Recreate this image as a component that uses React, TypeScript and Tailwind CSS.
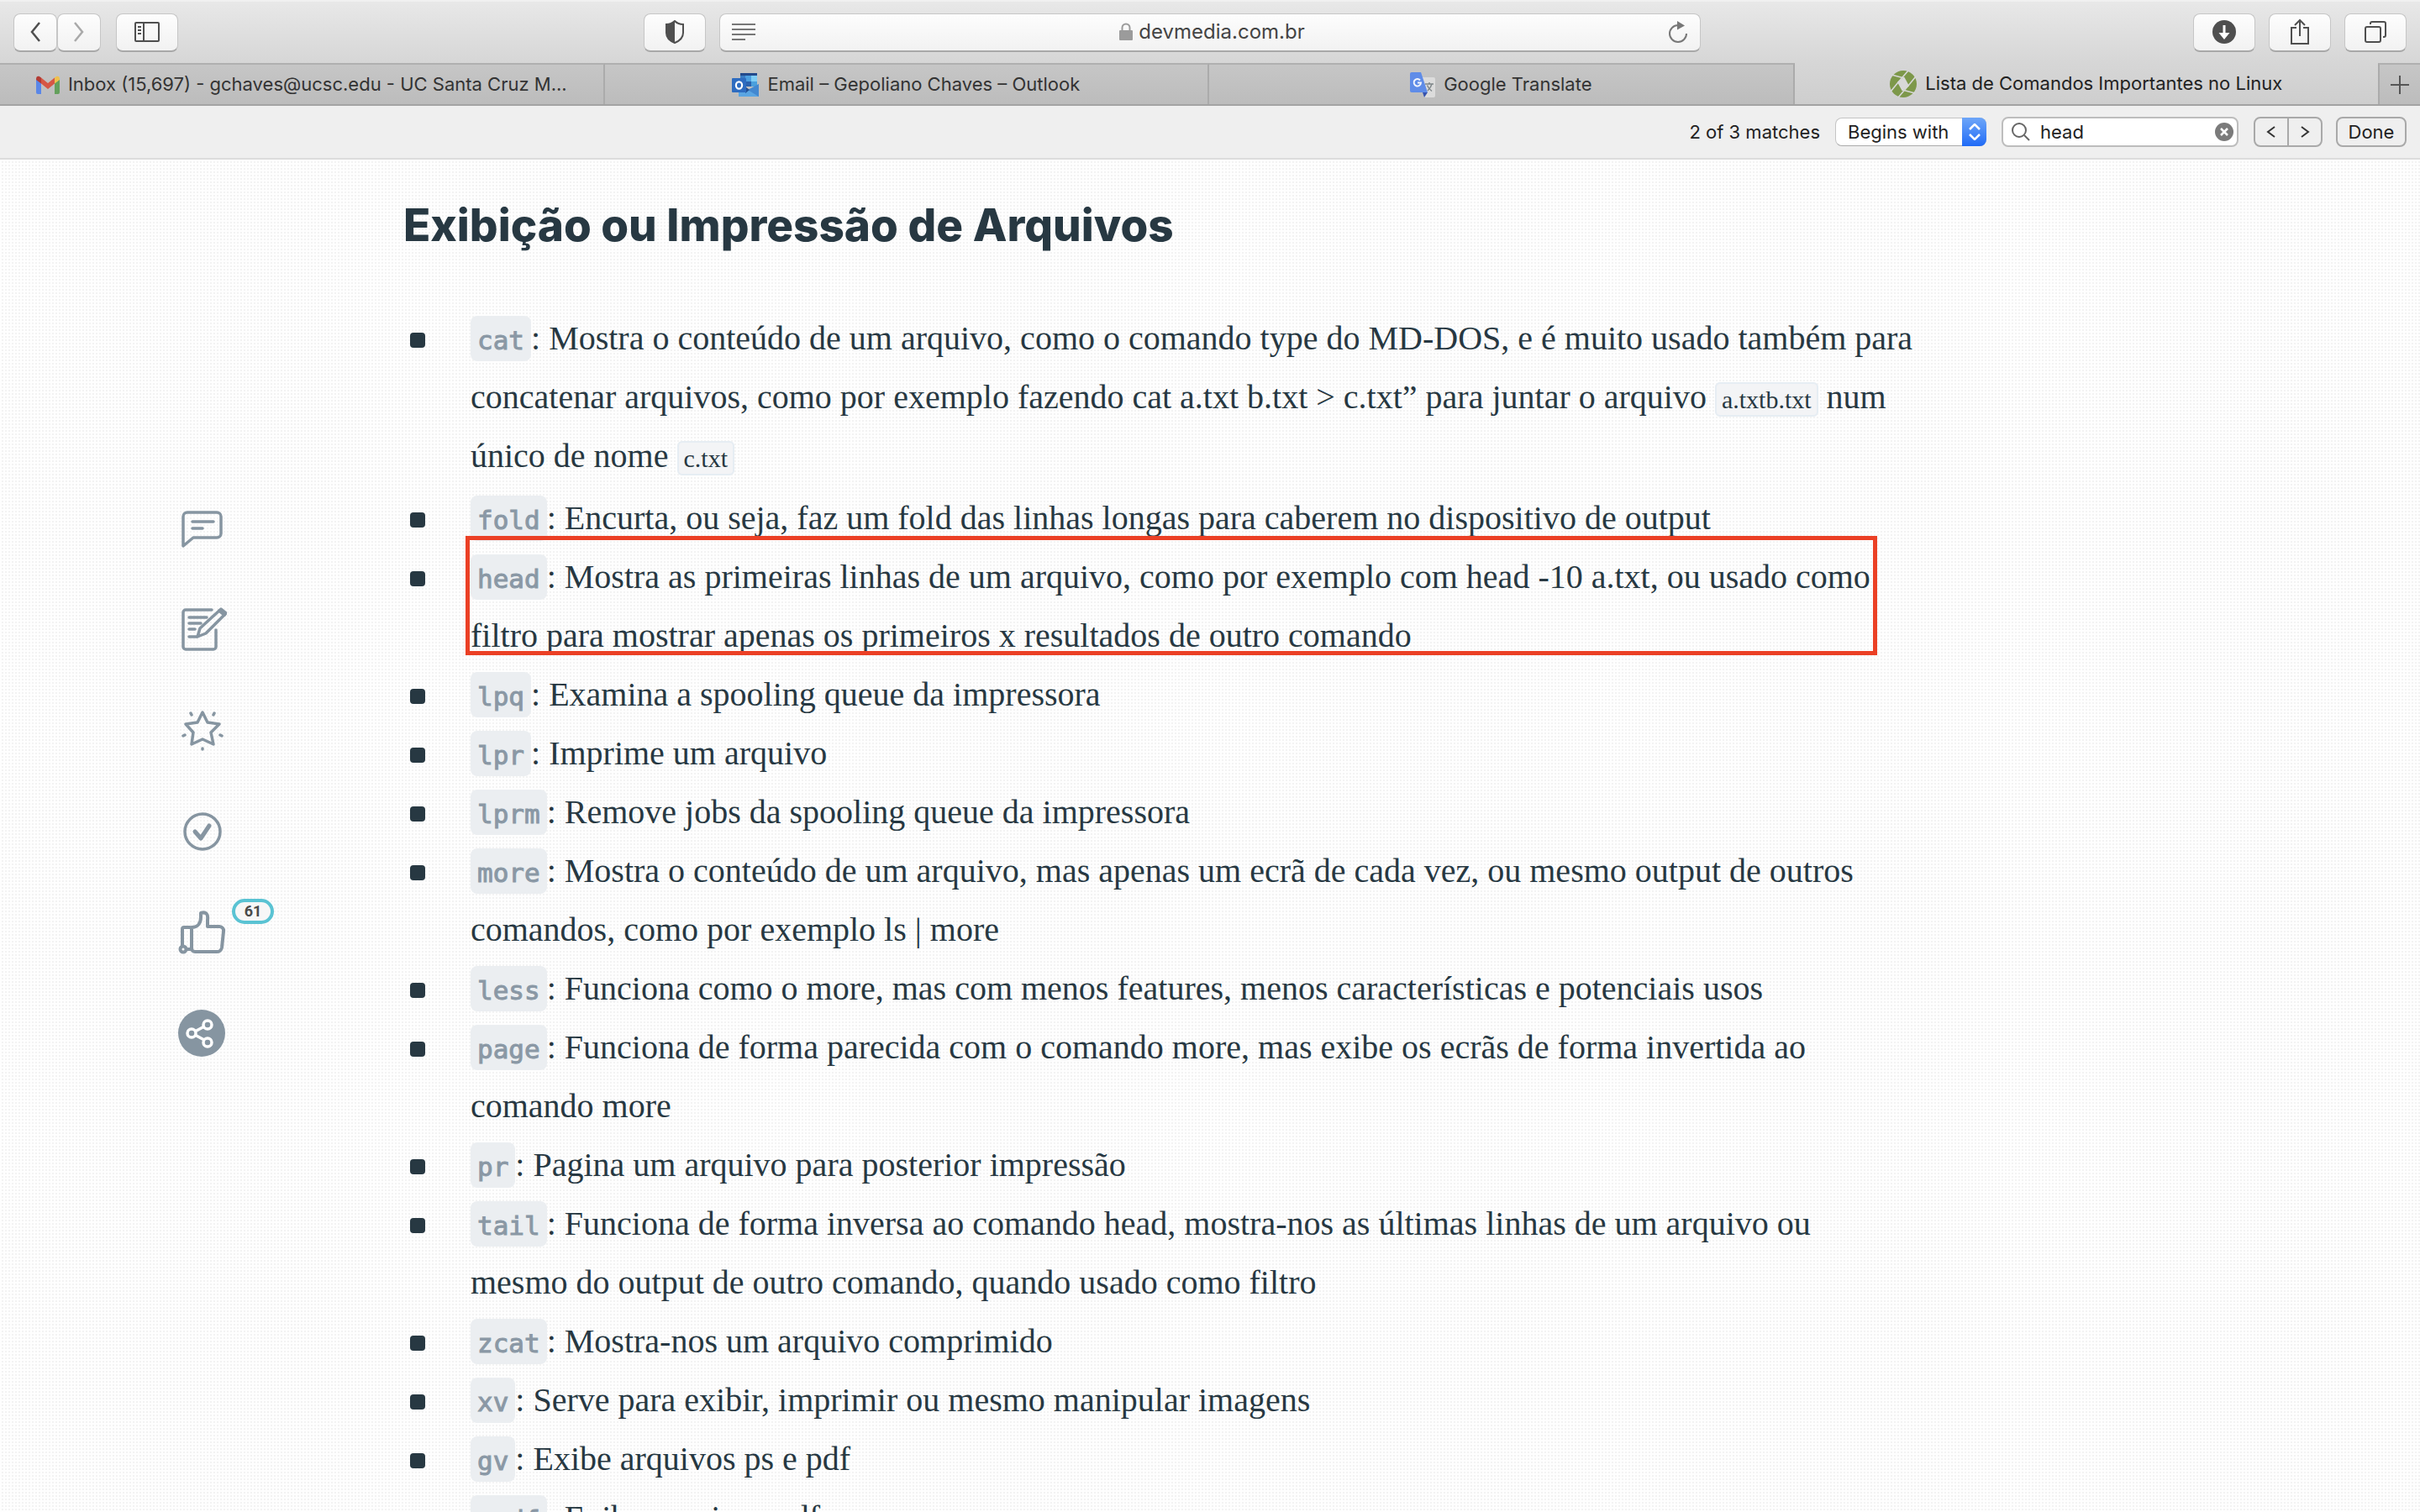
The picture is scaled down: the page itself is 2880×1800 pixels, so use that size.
import React from "react";

const commands: { name: string; body: React.ReactNode; boxed?: boolean }[] = [
  {
    name: "cat",
    body: (
      <>
        Mostra o conteúdo de um arquivo, como o comando type do MD-DOS, e é muito usado também para
        concatenar arquivos, como por exemplo fazendo cat a.txt b.txt &gt; c.txt” para juntar o arquivo{" "}
        <FileName>a.txtb.txt</FileName> num único de nome <FileName>c.txt</FileName>
      </>
    ),
  },
  { name: "fold", body: "Encurta, ou seja, faz um fold das linhas longas para caberem no dispositivo de output" },
  {
    name: "head",
    boxed: true,
    body: "Mostra as primeiras linhas de um arquivo, como por exemplo com head -10 a.txt, ou usado como filtro para mostrar apenas os primeiros x resultados de outro comando",
  },
  { name: "lpq", body: "Examina a spooling queue da impressora" },
  { name: "lpr", body: "Imprime um arquivo" },
  { name: "lprm", body: "Remove jobs da spooling queue da impressora" },
  {
    name: "more",
    body: "Mostra o conteúdo de um arquivo, mas apenas um ecrã de cada vez, ou mesmo output de outros comandos, como por exemplo ls | more",
  },
  { name: "less", body: "Funciona como o more, mas com menos features, menos características e potenciais usos" },
  {
    name: "page",
    body: "Funciona de forma parecida com o comando more, mas exibe os ecrãs de forma invertida ao comando more",
  },
  { name: "pr", body: "Pagina um arquivo para posterior impressão" },
  {
    name: "tail",
    body: "Funciona de forma inversa ao comando head, mostra-nos as últimas linhas de um arquivo ou mesmo do output de outro comando, quando usado como filtro",
  },
  { name: "zcat", body: "Mostra-nos um arquivo comprimido" },
  { name: "xv", body: "Serve para exibir, imprimir ou mesmo manipular imagens" },
  { name: "gv", body: "Exibe arquivos ps e pdf" },
  { name: "xpdf", body: "Exibe arquivos pdf" },
];

function FileName({ children }: { children: React.ReactNode }) {
  return (
    <span className="rounded-md border-2 border-[#e6edf3] bg-[#f3f4f6] px-1.5 py-0.5 text-[30px] leading-none">
      {children}
    </span>
  );
}

const toolButton =
  "flex h-[46px] shrink-0 items-center justify-center rounded-lg border border-[#c6c6c6] border-b-2 border-b-[#a8a8a8] bg-linear-to-b from-[#fdfdfd] to-[#f2f2f2] text-[#4f4f4f]";

function GmailIcon() {
  return (
    <svg viewBox="0 0 28 22" className="h-[22px] w-7 shrink-0" aria-hidden="true">
      <path d="M0 4v16a2 2 0 0 0 2 2h4V9z" fill="#5a87e8" />
      <path d="M28 4v16a2 2 0 0 1-2 2h-4V9z" fill="#64a05c" />
      <path d="M22 2.500l-8 6.500-8-6.500v7L14 16l8-6.500z" fill="#d65745" />
      <path d="M6 2.500C3-.5 0 .5 0 4v1l6 4.500z" fill="#b23c35" />
      <path d="M22 2.500C25-.5 28 .5 28 4v1l-6 4.500z" fill="#efc04d" />
    </svg>
  );
}

function OutlookIcon() {
  return (
    <svg viewBox="0 0 32 28" className="h-7 w-8 shrink-0" aria-hidden="true">
      <path d="M10 0h20v16H10z" fill="#3a7cc4" />
      <path d="M10 0h20v3H10z" fill="#234a8c" />
      <path d="M16 3h7v7h-7z" fill="#4c9fe0" />
      <path d="M23 3h7v7h-7z" fill="#7fcdf5" />
      <path d="M16 10h7v6h-7z" fill="#2a62ae" />
      <path d="M23 10h7v6h-7z" fill="#4aa0dd" />
      <path d="M8 14l12 7 12-8v15H8z" fill="#5aa5e2" />
      <path d="M32 13v15L19 20z" fill="#4388d0" />
      <path d="M16 16l5 4-5 4z" fill="#224f93" />
      <rect y="6" width="17" height="17" rx="1" fill="#2e6cc0" />
      <ellipse cx="8.500" cy="14.500" rx="3.600" ry="4.200" fill="none" stroke="#fff" strokeWidth="2.200" />
    </svg>
  );
}

function TranslateIcon() {
  return (
    <svg viewBox="0 0 30 30" className="size-[30px] shrink-0" aria-hidden="true">
      <path d="M11 6h17a2 2 0 0 1 2 2v20a2 2 0 0 1-2 2H17z" fill="#dcdcdc" />
      <path d="M15 24h6l-4 6z" fill="#3653ae" />
      <path d="M2 0h11l8 24H2a2 2 0 0 1-2-2V2a2 2 0 0 1 2-2z" fill="#5f8ce8" />
      <path d="M12 9.500A4.200 4.200 0 1 0 13 12.500H9" fill="none" stroke="#f0f4fd" strokeWidth="2" />
      <path d="M18 14H28M23 12v2M26 14c-1 4-3 6-5 8M20.500 15.500c1 3 3 5 5.500 7" fill="none" stroke="#7d8588" strokeWidth="1.400" />
    </svg>
  );
}

function DevmediaIcon() {
  return (
    <svg viewBox="0 0 32 32" className="size-8 shrink-0" aria-hidden="true">
      <circle cx="16" cy="16" r="16" fill="#7d984a" />
      <g fill="#d8d8d8" stroke="#d8d8d8" strokeWidth="1.600">
        <path d="M10 14l7-5 5 9-7 5z" />
        <path d="M10 14L22 0M17 9L2 5M22 18L10 32M15 23l15 4M22 18L31 7M10 14L1 25" fill="none" />
      </g>
    </svg>
  );
}

const tabs = [
  { title: "Inbox (15,697) - gchaves@ucsc.edu - UC Santa Cruz M...", Icon: GmailIcon, grow: "flex-31" },
  { title: "Email – Gepoliano Chaves – Outlook", Icon: OutlookIcon, grow: "flex-31" },
  { title: "Google Translate", Icon: TranslateIcon, grow: "flex-30" },
  { title: "Lista de Comandos Importantes no Linux", Icon: DevmediaIcon, grow: "flex-30", active: true },
];

function Toolbar() {
  return (
    <div className="flex h-[75px] items-center border-t-2 border-[#f0f0f0] bg-linear-to-b from-[#e8e8e8] to-[#d6d6d6] px-4">
      <div className="flex flex-1 items-center">
        <button aria-label="Back" className={`${toolButton} w-[52px]`}>
          <svg viewBox="0 0 14 24" className="h-6 w-3.5" fill="none" stroke="currentColor" strokeWidth="2.500" aria-hidden="true">
            <path d="M12 1L3 12l9 11" />
          </svg>
        </button>
        <button aria-label="Forward" className={`${toolButton} w-[52px]`}>
          <svg viewBox="0 0 14 24" className="h-6 w-3.5" fill="none" stroke="#a9a9a9" strokeWidth="2.500" aria-hidden="true">
            <path d="M2 1l9 11-9 11" />
          </svg>
        </button>
        <button aria-label="Sidebar" className={`${toolButton} ml-[18px] w-[74px]`}>
          <svg viewBox="0 0 30 24" className="h-6 w-[30px]" fill="none" stroke="currentColor" strokeWidth="2" aria-hidden="true">
            <rect x="1" y="1" width="28" height="22" rx="1" />
            <path d="M11 1v22M4 6h4M4 10h4M4 14h4" />
          </svg>
        </button>
      </div>
      <button aria-label="Privacy report" className={`${toolButton} w-[74px]`}>
        <svg viewBox="0 0 24 28" className="h-7 w-6" aria-hidden="true">
          <path d="M12 1C9 4 5 5 2 5v10c0 6 5 10 10 12 5-2 10-6 10-12V5c-3 0-7-1-10-4z" fill="none" stroke="currentColor" strokeWidth="2" />
          <path d="M12 1C9 4 5 5 2 5v10c0 6 5 10 10 12z" fill="currentColor" />
        </svg>
      </button>
      <div className={`${toolButton} ml-4 w-[1168px] px-3.5`}>
        <button aria-label="Reader" className="text-[#777]">
          <svg viewBox="0 0 28 20" className="h-5 w-7" stroke="currentColor" strokeWidth="2" aria-hidden="true">
            <path d="M0 1h28M0 7h28M0 13h28M0 19h16" />
          </svg>
        </button>
        <div className="flex flex-1 items-center justify-center gap-1.5 text-2xl text-[#444]">
          <svg viewBox="0 0 18 22" className="h-[22px] w-[18px]" aria-hidden="true">
            <rect x="1" y="9" width="16" height="12" rx="1" fill="#9b9b9b" />
            <path d="M4.500 9V6a4.500 4.500 0 0 1 9 0v3" fill="none" stroke="#9b9b9b" strokeWidth="2" />
          </svg>
          devmedia.com.br
        </div>
        <button aria-label="Reload" className="text-[#777]">
          <svg viewBox="0 0 24 26" className="h-[26px] w-6" aria-hidden="true">
            <path d="M12 5a10 10 0 1 0 10 10" fill="none" stroke="currentColor" strokeWidth="2" />
            <path d="M11 0l9 5.500-9 5z" fill="currentColor" />
          </svg>
        </button>
      </div>
      <div className="ml-[90px] flex flex-1 justify-end gap-4">
        <button aria-label="Downloads" className={`${toolButton} w-[74px]`}>
          <svg viewBox="0 0 28 28" className="size-7" aria-hidden="true">
            <circle cx="14" cy="14" r="14" fill="currentColor" />
            <path d="M12.500 6h3v9h5L14 23l-6.500-8h5z" fill="#fff" />
          </svg>
        </button>
        <button aria-label="Share" className={`${toolButton} w-[74px]`}>
          <svg viewBox="0 0 24 32" className="h-8 w-6" fill="none" stroke="currentColor" strokeWidth="2" aria-hidden="true">
            <path d="M8 11H2v19h20V11h-6M12 21V2M6 8l6-6 6 6" />
          </svg>
        </button>
        <button aria-label="Show tabs" className={`${toolButton} w-[74px]`}>
          <svg viewBox="0 0 26 26" className="size-[26px]" fill="none" stroke="currentColor" strokeWidth="2" aria-hidden="true">
            <rect x="1" y="7" width="18" height="18" rx="2" />
            <path d="M7 4V3a2 2 0 0 1 2-2h14a2 2 0 0 1 2 2v14a2 2 0 0 1-2 2h-1" />
          </svg>
        </button>
      </div>
    </div>
  );
}

function TabBar() {
  return (
    <nav className="flex h-[51px] border-b-2 border-[#a3a3a3] text-[22px]">
      {tabs.map(({ title, Icon, grow, active }) => (
        <button
          key={title}
          className={`${grow} flex min-w-0 items-center justify-center gap-2.5 bg-linear-to-b ${
            active
              ? "from-[#d6d6d6] to-[#cecece] text-[#222]"
              : "border-t-2 border-r-2 border-t-[#b0b0b0] border-r-[#ababab] from-[#c6c6c6] to-[#bcbcbc] text-[#333]"
          }`}
        >
          <Icon />
          <span className="whitespace-nowrap">{title}</span>
        </button>
      ))}
      <button
        aria-label="New tab"
        className="flex w-[50px] items-center justify-center border-t-2 border-l-2 border-t-[#b0b0b0] border-l-[#ababab] bg-linear-to-b from-[#c6c6c6] to-[#bcbcbc]"
      >
        <svg viewBox="0 0 22 22" className="size-[22px]" stroke="#555" strokeWidth="2" aria-hidden="true">
          <path d="M11 0v22M0 11h22" />
        </svg>
      </button>
    </nav>
  );
}

function FindBar() {
  return (
    <div className="flex h-16 items-center justify-end border-b-2 border-[#dcdcdc] bg-[#efefef] pr-4 text-[22px] text-[#222]">
      <output className="mr-[18px]">2 of 3 matches</output>
      <div className="relative mr-[18px] flex">
        <select
          aria-label="Match mode"
          defaultValue="begins"
          className="h-[34px] w-[180px] appearance-none rounded-lg border border-[#c4c4c4] border-b-[#aaa] bg-white pl-3.5"
        >
          <option value="begins">Begins with</option>
          <option value="contains">Contains</option>
        </select>
        <span className="pointer-events-none absolute inset-y-0 right-0 flex w-[29px] items-center justify-center rounded-r-lg bg-linear-to-b from-[#6ea6f8] to-[#1f6af6]">
          <svg viewBox="0 0 14 20" className="h-5 w-3.5" fill="none" stroke="#fff" strokeWidth="2.500" aria-hidden="true">
            <path d="M1 7l6-6 6 6M1 13l6 6 6-6" />
          </svg>
        </span>
      </div>
      <div className="mr-[18px] flex h-9 w-[282px] items-center rounded-lg border-2 border-[#bdbdbd] bg-white pr-1 pl-2.5">
        <svg viewBox="0 0 22 22" className="size-[22px] shrink-0" fill="none" stroke="#666" strokeWidth="2" aria-hidden="true">
          <circle cx="9" cy="9" r="8" />
          <path d="M15 15l6 6" />
        </svg>
        <input aria-label="Find on page" defaultValue="head" className="ml-3 min-w-0 flex-1 bg-transparent outline-none" />
        <button aria-label="Clear">
          <svg viewBox="0 0 22 22" className="size-[22px]" aria-hidden="true">
            <circle cx="11" cy="11" r="11" fill="#7b7b7b" />
            <path d="M7 7l8 8M15 7l-8 8" stroke="#fff" strokeWidth="2.500" />
          </svg>
        </button>
      </div>
      <div className="mr-4 flex h-9 w-[82px] rounded-lg border-2 border-[#a9a9a9]">
        <button aria-label="Previous match" className="flex flex-1 items-center justify-center border-r-2 border-[#a9a9a9]">
          <svg viewBox="0 0 12 14" className="h-3.5 w-3" fill="none" stroke="#333" strokeWidth="2" aria-hidden="true">
            <path d="M10 1L2 7l8 6" />
          </svg>
        </button>
        <button aria-label="Next match" className="flex flex-1 items-center justify-center">
          <svg viewBox="0 0 12 14" className="h-3.5 w-3" fill="none" stroke="#333" strokeWidth="2" aria-hidden="true">
            <path d="M2 1l8 6-8 6" />
          </svg>
        </button>
      </div>
      <button className="flex h-9 w-[84px] items-center justify-center rounded-lg border-2 border-[#a9a9a9]">Done</button>
    </div>
  );
}

function SideActions() {
  const icon = "h-[60px] w-[60px]";
  return (
    <aside className="flex w-[480px] shrink-0 flex-col items-center gap-[60px] pt-[410px] text-[#8695a1]">
      <button aria-label="Comentários">
        <svg viewBox="0 0 60 60" className={icon} fill="none" stroke="currentColor" strokeWidth="3.500" strokeLinecap="round" strokeLinejoin="round" aria-hidden="true">
          <path d="M8 50V15a5 5 0 0 1 5-5h35a5 5 0 0 1 5 5v20a5 5 0 0 1-5 5H20z" />
          <path d="M19 21h25M19 29h12" />
        </svg>
      </button>
      <button aria-label="Anotações">
        <svg viewBox="0 0 60 60" className={icon} fill="none" stroke="currentColor" strokeWidth="3.500" strokeLinecap="round" strokeLinejoin="round" aria-hidden="true">
          <path d="M42 6H11a3 3 0 0 0-3 3v41a3 3 0 0 0 3 3h33a3 3 0 0 0 3-3V30" />
          <path d="M15 15h21M15 22h14M15 29h7M15 38h9" />
          <path d="M25 38l3-10L53 5l6 5-24 24z" />
          <path d="M51 7l6 5" strokeWidth="4" />
        </svg>
      </button>
      <button aria-label="Favoritar">
        <svg viewBox="0 0 60 60" className={icon} fill="none" stroke="currentColor" strokeWidth="3.500" strokeLinecap="round" strokeLinejoin="round" aria-hidden="true">
          <path d="M31 8l6 12 14 2-10 10 3 14-13-6-13 6 2-14L11 22l14-2z" />
          <path d="M17 9l1 2M45 9l-1 2M8 36l2-1M54 36l-2-1M31 51v1" />
        </svg>
      </button>
      <button aria-label="Marcar como concluído">
        <svg viewBox="0 0 60 60" className={icon} fill="none" stroke="currentColor" strokeWidth="3.500" strokeLinecap="round" strokeLinejoin="round" aria-hidden="true">
          <circle cx="31" cy="30" r="21" />
          <path d="M22 30l7 8 10-15" strokeWidth="5" />
        </svg>
      </button>
      <button aria-label="Gostei, 61" className="relative">
        <svg viewBox="0 4 60 60" className={icon} fill="none" stroke="currentColor" strokeWidth="4" strokeLinecap="round" strokeLinejoin="round" aria-hidden="true">
          <path d="M18 28c7 0 11-5 11-12v-5c6-2 9 1 8 8v8h14a5 5 0 0 1 5 6l-2 19a6 6 0 0 1-6 5H22a4 4 0 0 1-4-4zM16 28h-7a2 2 0 0 0-2 2v20M12 54h6" />
          <circle cx="8" cy="54" r="3.500" />
        </svg>
        <span className="absolute -top-2.5 left-[66px] flex h-[30px] w-[50px] items-center justify-center rounded-full border-4 border-[#5ac3d3] bg-[#f7f7f7] font-[Roboto] text-lg font-bold text-[#4a4a4a]">
          61
        </span>
      </button>
      <button aria-label="Compartilhar">
        <svg viewBox="0 0 60 60" className={icon} aria-hidden="true">
          <circle cx="30" cy="30" r="28" fill="currentColor" />
          <g fill="none" stroke="#fff" strokeWidth="3.500">
            <circle cx="18" cy="30" r="5" />
            <circle cx="37" cy="20" r="5" />
            <circle cx="37" cy="41" r="5" />
            <path d="M22 28l11-6M22 32l11 6" />
          </g>
        </svg>
      </button>
    </aside>
  );
}

export default function App() {
  return (
    <div className="flex h-screen flex-col overflow-hidden bg-[#f3f3f3] font-[Inter,sans-serif]">
      <header>
        <Toolbar />
        <TabBar />
        <FindBar />
      </header>
      <div className="flex min-h-0 flex-1 overflow-hidden bg-[linear-gradient(to_right,#fefefe_50%,transparent_50%),linear-gradient(#fefefe_50%,transparent_50%)] bg-size-[4px_4px]">
        <SideActions />
        <main className="w-full max-w-[1799px] pt-[44px] text-[#273842]">
          <h2 className="text-[53px] leading-[68px] font-extrabold">Exibição ou Impressão de Arquivos</h2>
          <ul className="mt-[66px] font-['Liberation_Serif',serif] text-[40px] leading-[70px]">
            {commands.map(({ name, body, boxed }) => (
              <li key={name} className="flex first:mb-1">
                <span className="mt-7 mr-[54px] ml-2 size-[18px] shrink-0 rounded-sm bg-[#273842]" />
                <div className="relative min-w-0 flex-1">
                  {boxed && <span className="absolute -top-3.5 -left-1.5 h-[142px] w-[1680px] border-[5px] border-[#eb4025]" />}
                  <code className="rounded-lg bg-[#ebeef1] px-2 pt-[11px] pb-[7px] font-['DejaVu_Sans_Mono',monospace] text-[31px] leading-none text-[#8a98a5] [-webkit-text-stroke:1px]">
                    {name}
                  </code>
                  : {body}
                </div>
              </li>
            ))}
          </ul>
        </main>
      </div>
    </div>
  );
}
